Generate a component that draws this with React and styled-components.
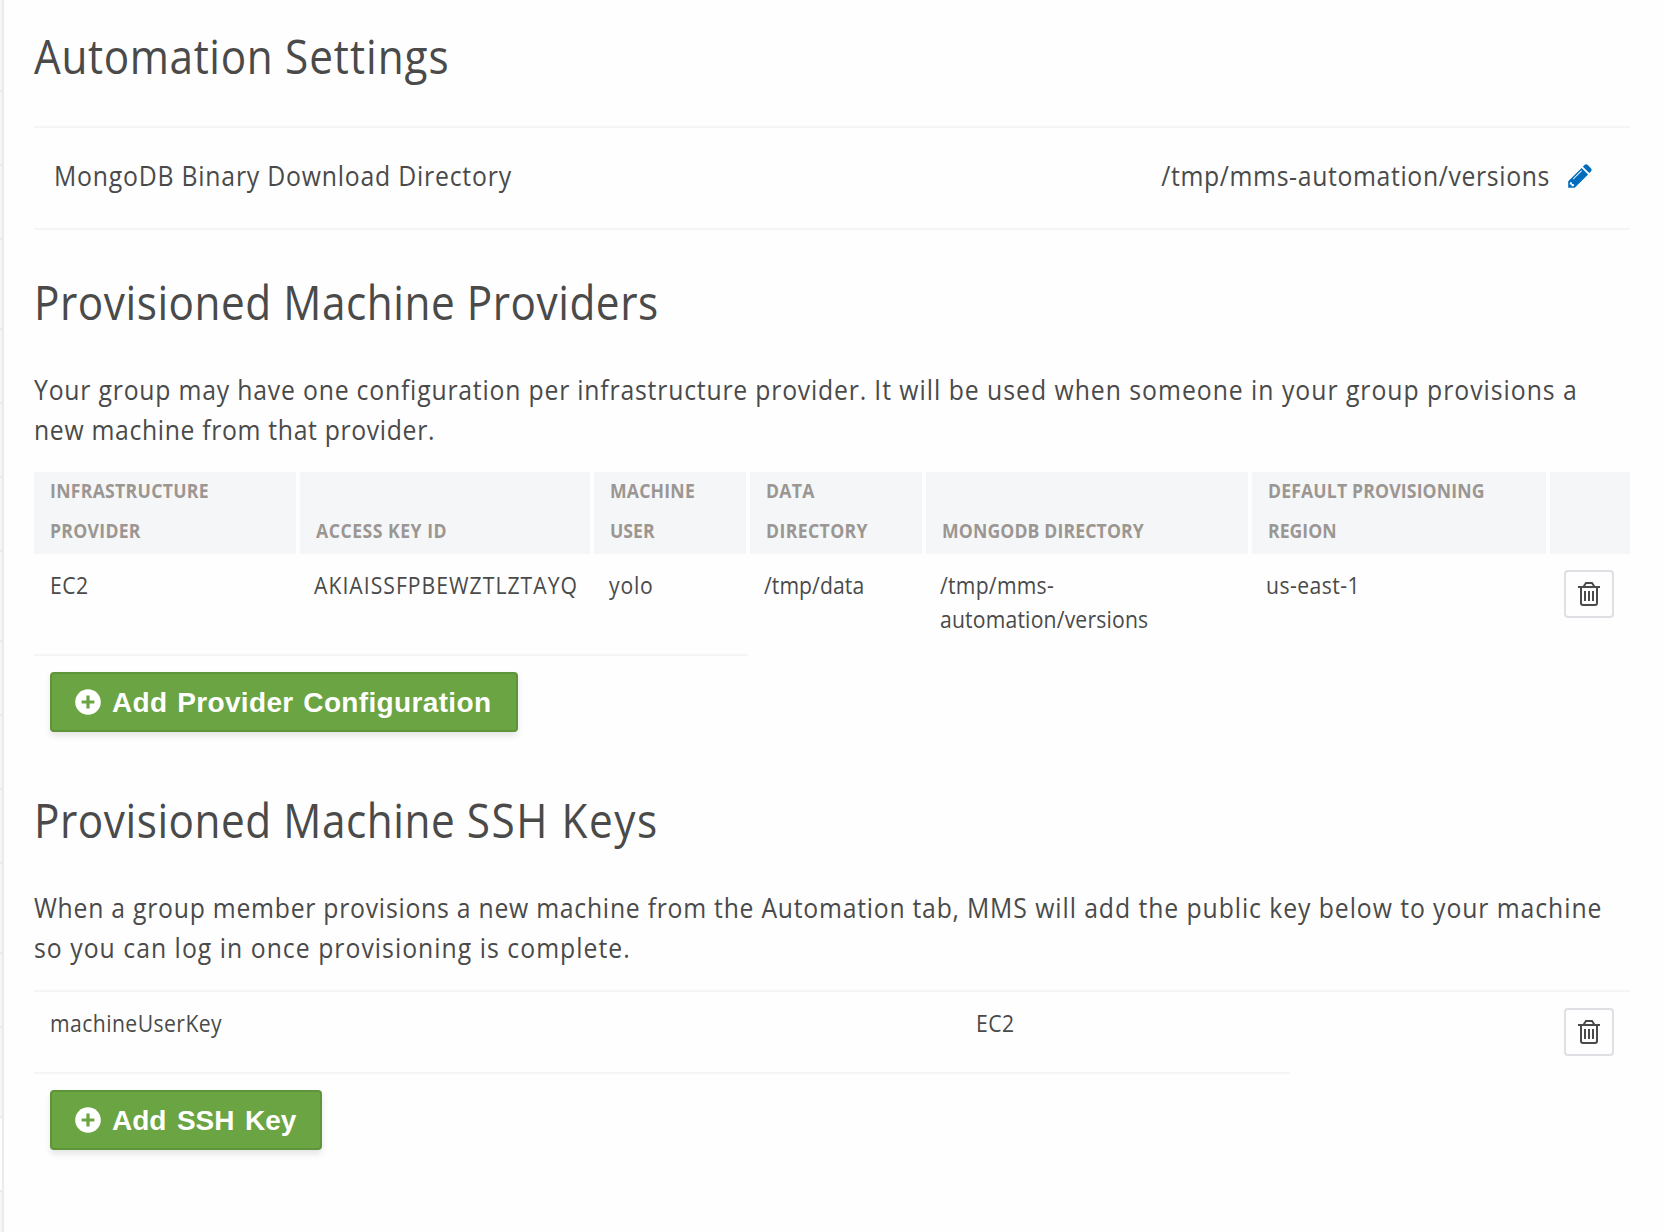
import React from "react";
import styled, { createGlobalStyle } from "styled-components";

const color = {
  page: "#fefefe",
  text: "#4a4a4a",
  muted: "#9c9692",
  rule: "#f5f5f6",
  headerBg: "#f4f6f8",
  navBg: "#f6f6f8",
  navRule: "#ebebed",
  link: "#006cbc",
  green: "#6ba442",
  greenEdge: "#5f953a",
  buttonEdge: "#dfdfe4",
};

const GlobalStyle = createGlobalStyle`
  *, *::before, *::after { box-sizing: border-box; }
  body {
    margin: 0;
    background: ${color.page};
    color: ${color.text};
    font-family: "Open Sans", "Noto Sans", sans-serif;
  }
`;

const Page = styled.div`
  display: flex;
  height: 1232px;
  overflow: hidden;
`;

const NavEdge = styled.nav`
  flex: none;
  width: 4px;
  border-right: 2px solid ${color.navRule};
`;

const NavItem = styled.div`
  height: ${(p) => p.$height}px;
  border-bottom: 2px solid ${color.navRule};
  background: ${(p) => (p.$active ? color.page : color.navBg)};
`;

const Main = styled.main`
  flex: none;
  width: 1596px;
  margin-left: 30px;
  padding-top: 24px;
`;

const Section = styled.section`
  height: ${(p) => p.$height}px;
`;

/* Slightly narrowed text line; spacing is tuned per string. */
const Line = styled.span`
  display: block;
  width: max-content;
  white-space: nowrap;
  letter-spacing: ${(p) => p.$spacing}px;
  transform: scaleX(0.9);
  transform-origin: ${(p) => (p.$end ? "right" : "left")} center;
`;

const Spaced = styled.span`
  letter-spacing: ${(p) => p.$spacing}px;
`;

const Heading = styled.h1`
  margin: 0;
  font-size: 47px;
  font-weight: 400;
  line-height: 64px;
`;

const SettingRow = styled.div`
  display: flex;
  justify-content: space-between;
  height: 104px;
  margin-top: 38px;
  padding: 28px 38px 0 20px;
  border-top: 2px solid ${color.rule};
  border-bottom: 2px solid ${color.rule};
  font-size: 27.5px;
  line-height: 40px;
`;

const SettingValue = styled.div`
  display: flex;
  gap: 18px;
`;

const EditButton = styled.button`
  display: block;
  width: 24px;
  height: 24px;
  margin: 8px 0 0;
  padding: 0;
  border: 0;
  background: none;
  color: ${color.link};
  svg { display: block; }
`;

const Description = styled.p`
  margin: 36px 0 22px;
  font-size: 27.5px;
  line-height: 40px;
`;

const ProviderGrid = styled.div`
  display: grid;
  grid-template-columns: 262px 290px 152px 172px 322px 294px 80px;
  column-gap: 4px;
`;

const HeadCell = styled.div`
  display: flex;
  flex-direction: column;
  justify-content: flex-end;
  height: 82px;
  padding: 0 0 3px 16px;
  background: ${color.headerBg};
  color: ${color.muted};
  font-size: 19.6px;
  font-weight: 700;
  line-height: 40px;
`;

const ProviderRow = styled(ProviderGrid)`
  height: 100px;
`;

const Cell = styled.div`
  padding: 14px 0 0 ${(p) => p.$left}px;
  font-size: 23.5px;
  line-height: 34px;
`;

const ActionCell = styled.div`
  padding: 16px 0 0 ${(p) => p.$left}px;
`;

const Rule = styled.div`
  width: ${(p) => p.$width};
  height: 2px;
  background: ${color.rule};
`;

const KeyRow = styled.div`
  display: grid;
  grid-template-columns: 926px 1fr 66px;
  height: 80px;
`;

const TrashButton = styled.button`
  display: flex;
  justify-content: center;
  width: 50px;
  height: 48px;
  padding: 10px 0 0;
  border: 2px solid ${color.buttonEdge};
  border-radius: 4px;
  background: ${color.page};
  color: ${color.text};
`;

const AddButton = styled.button`
  display: flex;
  align-items: center;
  gap: 11px;
  width: ${(p) => p.$width}px;
  height: 60px;
  margin: 16px 0 0 16px;
  padding: 0 0 0 23px;
  border: 2px solid ${color.greenEdge};
  border-radius: 4px;
  background: ${color.green};
  box-shadow: 0 4px 6px rgba(0, 0, 0, 0.1);
  color: #fff;
  font-family: "Liberation Sans", Arial, sans-serif;
  font-size: 28px;
  font-weight: 700;
  letter-spacing: ${(p) => p.$spacing}px;
  word-spacing: ${(p) => p.$wordSpacing}px;
  white-space: nowrap;
`;

const ButtonLabel = styled.span`
  padding-top: 2px;
`;

const PencilIcon = () => (
  <svg width="24" height="24" viewBox="0 0 24 24" fill="currentColor">
    <path
      fillRule="evenodd"
      d="M13.6 3.9L20.1 10.4L6.7 23.8H.2V17.3ZM2.2 18.2L1.6 20.3L3.3 20.8L3.9 22.5L6 21.9L5.9 20.2L4.2 20L3.8 18.2ZM13.3 6.3L4.7 14.9L5.4 15.6L14 7Z"
    />
    <path d="M14.9 2.7L16.5 1.1Q18.2 -.5 19.8 1.1L22.9 4.2Q24.4 5.8 22.9 7.4L21.3 9.1Z" />
  </svg>
);

const TrashIcon = () => (
  <svg width="22" height="24" viewBox="0 0 22 24" fill="none" stroke="currentColor" strokeWidth="2">
    <path d="M0 5H22M6 5V4L8 1H14L16 4V5M3 5V21Q3 23 5 23H17Q19 23 19 21V5M7 9V19M11 9V19M15 9V19" />
  </svg>
);

const PlusCircleIcon = () => (
  <svg width="26" height="26" viewBox="0 0 26 26">
    <circle cx="13" cy="13" r="12.8" fill="#fff" />
    <path d="M13 6.6V19.4M6.6 13H19.4" stroke={color.green} strokeWidth="3.2" />
  </svg>
);

const navItems = [92, 74, 74, 90, 74, 74, 74, 90, 74, 74, 74, 90, 74, 90, 74, 60];

const providerColumns = [
  [["INFRASTRUCTURE", 0.32], ["PROVIDER", 0.3]],
  [["ACCESS KEY ID", 0.55]],
  [["MACHINE", 0.22], ["USER", 0]],
  [["DATA", 0.3], ["DIRECTORY", 0.42]],
  [["MONGODB DIRECTORY", 0.14]],
  [["DEFAULT PROVISIONING", 0.16], ["REGION", 0]],
  [],
];

const providerCells = [
  [["EC2", 0.5]],
  [["AKIAISSFPBEWZTLZTAYQ", 1.14]],
  [["yolo", 0.9]],
  [["/tmp/data", 0.08]],
  [["/tmp/mms-", 0.29], ["automation/versions", 0.2]],
  [["us-east-1", 0.49]],
];

const Lines = ({ items }) =>
  items.map(([text, spacing]) => (
    <Line key={text} $spacing={spacing}>{text}</Line>
  ));

export default function App() {
  return (
    <Page>
      <GlobalStyle />
      <NavEdge>
        {navItems.map((height, i) => (
          <NavItem key={i} $height={height} $active={i === 14} />
        ))}
      </NavEdge>
      <Main>
        <Section $height={246}>
          <Heading>
            <Line $spacing={0.7}>Automation <Spaced $spacing={1.1}>Settings</Spaced></Line>
          </Heading>
          <SettingRow>
            <Line $spacing={0.9}>MongoDB Binary Download Directory</Line>
            <SettingValue>
              <Line $end $spacing={0.73}>/tmp/mms-automation/versions</Line>
              <EditButton aria-label="Edit"><PencilIcon /></EditButton>
            </SettingValue>
          </SettingRow>
        </Section>

        <Section $height={518}>
          <Heading><Line $spacing={0.6}>Provisioned Machine Providers</Line></Heading>
          <Description>
            <Line $spacing={0.9}>
              Your group may have one configuration per infrastructure provider.{" "}
              <Spaced $spacing={1.1}>It will be used when someone in your group provisions a</Spaced>
            </Line>
            <Line $spacing={0.75}>new machine from that provider.</Line>
          </Description>
          <ProviderGrid>
            {providerColumns.map((lines, i) => (
              <HeadCell key={i}><Lines items={lines} /></HeadCell>
            ))}
          </ProviderGrid>
          <ProviderRow>
            {providerCells.map((lines, i) => (
              <Cell key={i} $left={i === 0 ? 16 : i === 2 ? 15 : 14}><Lines items={lines} /></Cell>
            ))}
            <ActionCell $left={14}><TrashButton aria-label="Delete"><TrashIcon /></TrashButton></ActionCell>
          </ProviderRow>
          <Rule $width="714px" />
          <AddButton $width={468} $spacing={0.35} $wordSpacing={1.6}>
            <PlusCircleIcon /><ButtonLabel>Add Provider Configuration</ButtonLabel>
          </AddButton>
        </Section>

        <Section $height={444}>
          <Heading>
            <Line $spacing={0.6}>Provisioned Machine <Spaced $spacing={1.7}>SSH Keys</Spaced></Line>
          </Heading>
          <Description>
            <Line $spacing={0.84}>
              When a group member provisions a new machine from the Automation tab,{" "}
              <Spaced $spacing={1.04}>MMS will add the public key below to your machine</Spaced>
            </Line>
            <Line $spacing={1.15}>so you can log in once provisioning is complete.</Line>
          </Description>
          <Rule $width="100%" />
          <KeyRow>
            <Cell $left={16}><Line $spacing={0.48}>machineUserKey</Line></Cell>
            <Cell $left={16}><Line $spacing={0.5}>EC2</Line></Cell>
            <ActionCell $left={0}><TrashButton aria-label="Delete"><TrashIcon /></TrashButton></ActionCell>
          </KeyRow>
          <Rule $width="1256px" />
          <AddButton $width={272} $spacing={0} $wordSpacing={2.7}>
            <PlusCircleIcon /><ButtonLabel>Add SSH Key</ButtonLabel>
          </AddButton>
        </Section>
      </Main>
    </Page>
  );
}
